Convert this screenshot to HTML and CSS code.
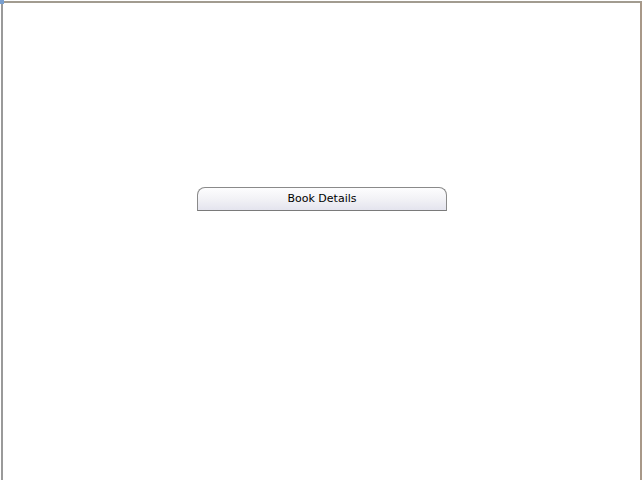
FILE: index.html
```html
<!DOCTYPE html>
<html>
<head>
<meta charset="utf-8">
<link rel="stylesheet" href="styles.css">
</head>
<body>
<div class="frame">
  <div class="corner"></div>
  <div class="content">
    <button class="tab-button">Book Details</button>
  </div>
</div>
</body>
</html>
```
FILE: styles.css
```css
html, body {
  margin: 0;
  padding: 0;
  background: #ffffff;
  height: 100%;
  overflow: hidden;
}
.frame {
  position: relative;
  margin: 1px 0 0 1px;
  width: 637px;
  height: 500px;
  border-top: 2px solid #a29c90;
  border-left: 2px solid #9a9a9a;
  border-right: 2px solid #a89888;
  background: #fff;
}
.corner {
  position: absolute;
  left: -3px;
  top: -3px;
  width: 4px;
  height: 4px;
  background: #7aa0d0;
}
.content {
  padding-top: 184px;
  padding-left: 194px;
}
.tab-button {
  display: block;
  box-sizing: border-box;
  width: 250px;
  height: 24px;
  margin: 0;
  padding: 1px 0 0 0;
  border: 1px solid #8a8a8a;
  border-bottom-color: #7a7a7a;
  border-radius: 8px 8px 0 0;
  background: linear-gradient(to bottom, #fdfdfe 0%, #f2f2f6 50%, #e4e4ee 100%);
  font-family: "DejaVu Sans", Verdana, sans-serif;
  font-size: 11px;
  color: #000;
  text-align: center;
  line-height: 20.5px;
}
```
